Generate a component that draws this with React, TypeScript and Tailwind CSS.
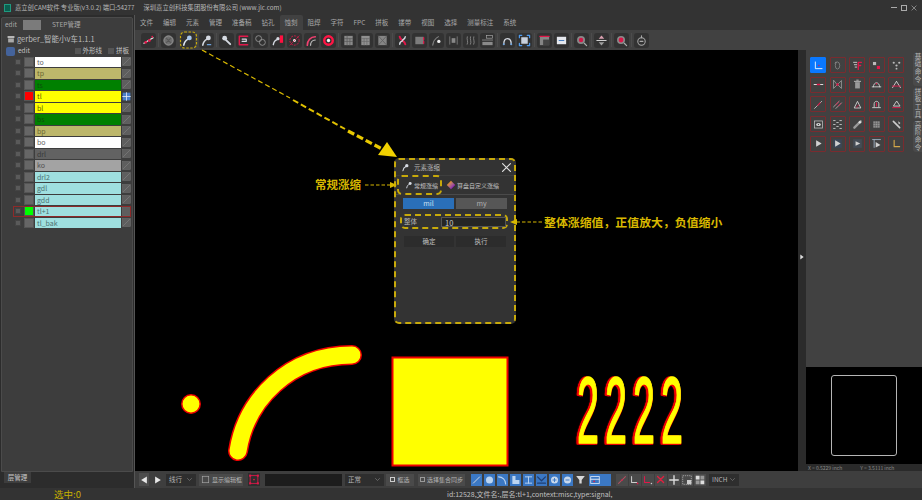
import type { ReactNode } from "react";

const W = "#d5dae2";
const R = "#e0184a";
const B = "#6fa3dc";
const G = "#8f8f8f";

function Ln({ d, c = W, w = 1.2 }: { d: string; c?: string; w?: number }) {
  return <path d={d} fill="none" stroke={c} strokeWidth={w} strokeLinecap="round" strokeLinejoin="round" />;
}

function Dot({ x, y, r = 1.5, c = R }: { x: number; y: number; r?: number; c?: string }) {
  return <circle cx={x} cy={y} r={r} fill={c} />;
}

function Ico({ children, className = "w-full h-full" }: { children: ReactNode; className?: string }) {
  return (
    <svg viewBox="0 0 14 14" className={className}>
      {children}
    </svg>
  );
}

const pin = (
  <>
    <Ln d="M3 12 C3.5 8.5 5.5 6.5 7.5 5.5" w={1.7} />
    <circle cx="9" cy="4.2" r="2.6" fill={W} />
  </>
);

const toolGroups: ReactNode[][] = [
  [
    <>
      <Ln d="M2 10 L12 4" c="#eee" />
      <Dot x={4} y={9} />
      <Dot x={8} y={7} />
      <Dot x={11} y={3} r={1} />
    </>,
  ],
  [
    <>
      <circle cx="7" cy="7" r="5" fill="#707070" stroke="#999" />
      <Ln d="M5 5 L9 9 M9 5 L5 9" c="#555" />
    </>,
    <>
      <Ln d="M3 12 C3.5 8.5 5.5 6.5 7.5 5.5" w={1.7} c="#dfe6f0" />
      <circle cx="9" cy="4.2" r="2.6" fill="#a8c8ee" />
    </>,
    <>
      {pin}
      <Ln d="M8 11.5 H11.5" c={B} w={1.4} />
    </>,
  ],
  [
    <>
      <circle cx="5" cy="4.5" r="2.6" fill={W} />
      <Ln d="M6 6 L11 11" w={2} />
    </>,
    <>
      <Ln d="M2.5 2.5 H11.5 M2.5 11.5 H11.5 M2.5 2.5 V11.5" c={R} w={1.6} />
      <Ln d="M5.5 5.5 H10 V8 H5.5" w={1.2} />
    </>,
    <>
      <circle cx="5" cy="5" r="3.2" fill="none" stroke={G} />
      <circle cx="9" cy="9" r="3.2" fill="none" stroke={G} />
    </>,
    <>
      <Ln d="M2.5 11.5 C3 8 5 6.5 6.5 6" w={1.5} />
      <circle cx="7.5" cy="5" r="1.8" fill={W} />
      <rect x="9.5" y="1.5" width="3.5" height="8" fill="#ff1040" />
    </>,
    <>
      <circle cx="7" cy="7" r="5" fill="none" stroke={R} strokeDasharray="2 1.2" />
      <Dot x={7} y={7} r={1.6} c="#eee" />
      <Ln d="M2 12 L12 2" c={R} w={0.7} />
    </>,
    <>
      <Ln d="M2.5 12 C2.5 7 6 3 11 3" c="#f04070" w={1.8} />
      <Ln d="M6 12 C6 9 8 6.5 11 6.5" c="#ccc" w={1.2} />
    </>,
    <>
      <circle cx="7" cy="7" r="4.6" fill="none" stroke="#ff1545" strokeWidth="2.6" />
      <Dot x={7} y={7} r={1.8} c="#f5f5f5" />
    </>,
  ],
  [
    <>
      <rect x="2.5" y="2" width="9" height="10" fill="#8a8a8a" />
      <Ln d="M5.5 2 V12 M8.5 5 V12 M2.5 5 H11.5 M2.5 8 H11.5" c="#555" w={0.7} />
    </>,
    <>
      <rect x="2.5" y="2" width="9" height="10" fill="#909090" />
      <Ln d="M5.5 5 V12 M8.5 5 V12 M2.5 5 H11.5 M2.5 8 H11.5" c="#666" w={0.7} />
    </>,
    <>
      <rect x="2.5" y="2" width="9" height="10" fill="#858585" />
      <Ln d="M2.5 2 L7 7 L11.5 2 M2.5 12 L7 7 L11.5 12" c="#5a5a5a" w={0.8} />
    </>,
  ],
  [
    <>
      <Ln d="M4 3 C4 6 10 8 10 11" c={R} w={2.2} />
      <Ln d="M10 3 C10 5 8 6 7 6.5 M4 11 C4 9 5.5 8 7 7.5" w={1.5} />
    </>,
    <>
      <rect x="2.5" y="3" width="9" height="8" fill="#7c7c7c" />
      <Ln d="M11.5 4 V6 M11.5 8 V10" c={R} w={1.4} />
    </>,
    <>
      <Ln d="M3 12 C3.5 8 5 5 9 3" c="#aaa" w={0.9} />
      <Dot x={9.5} y={8} r={1.8} c="#eee" />
    </>,
    <>
      <rect x="5" y="4.5" width="4" height="5" fill="#888" />
      <Ln d="M3 3 V11 M11 3 V11" c="#888" w={0.8} />
    </>,
    <Ln d="M3.5 3 C2.5 6 5 8 3.5 11 M7 3 C6 6 8.5 8 7 11 M10.5 3 C9.5 6 12 8 10.5 11" c="#999" w={0.8} />,
    <>
      <rect x="6" y="1.5" width="6.5" height="3" fill="none" stroke="#aaa" strokeWidth="0.7" />
      <Ln d="M1.5 6.5 H12.5" c="#aaa" w={0.7} />
      <rect x="1.5" y="8.5" width="11" height="3.5" fill="#8a8a8a" />
    </>,
  ],
  [
    <>
      <Ln d="M3 11 C3 3 11 3 11 11" w={1.4} />
      <Dot x={3} y={11} r={1.1} c={B} />
      <Dot x={11} y={11} r={1.1} c={B} />
    </>,
    <>
      <rect x="3.5" y="3.5" width="7" height="7" fill="#c8d0dc" />
      <Ln d="M1.5 4 V1.5 H4 M10 1.5 H12.5 V4 M1.5 10 V12.5 H4 M10 12.5 H12.5 V10" c="#4d9bf0" w={1.3} />
    </>,
  ],
  [
    <>
      <rect x="2" y="3" width="10" height="9" fill="#858585" />
      <rect x="5.5" y="6" width="6.5" height="6" fill="#444" />
      <Ln d="M2 2.5 H12" c={R} w={1.4} />
    </>,
    <>
      <rect x="2" y="3" width="10" height="8" fill="#e5e8ee" />
      <Ln d="M4.5 7 H9.5" c="#4a7fc0" w={1.2} />
    </>,
  ],
  [
    <>
      <circle cx="6.5" cy="6.5" r="4.3" fill="#888" />
      <circle cx="6.5" cy="6.5" r="2.4" fill="#d01848" />
      <Ln d="M10 10 L12.5 12.5" c="#aaa" w={1.3} />
    </>,
  ],
  [
    <>
      <Ln d="M2 7 H12" c="#ddd" w={1} />
      <path d="M7 1.5 L10 5 H4 Z" fill="#d9a0b0" />
      <path d="M7 12.5 L10 9 H4 Z" fill="#a0a0a0" />
    </>,
  ],
  [
    <>
      <circle cx="6.5" cy="6.5" r="4.3" fill="#8a8a8a" />
      <circle cx="6.5" cy="6.5" r="2.6" fill="#d81848" />
      <Ln d="M10 10 L12.5 12.5" c="#aaa" w={1.3} />
    </>,
  ],
  [
    <>
      <circle cx="7" cy="8" r="4" fill="none" stroke="#aaa" strokeWidth="1.1" />
      <Ln d="M5.5 8 H8.5 M7 2 V4" c="#aaa" />
    </>,
  ],
];

const sideIcons: ReactNode[] = [
  <>
    <Ln d="M3 2.5 V11 H11.5" c="#fff" w={1.1} />
    <Dot x={7.5} y={7} r={1} />
  </>,
  <>
    <ellipse cx="7" cy="7" rx="2.8" ry="4.5" fill="none" stroke="#888" />
    <Ln d="M5 2.5 L4 4" c="#888" />
  </>,
  <>
    <Ln d="M2 3 H6 M3 6 H6 M4 9 H6" c="#ccc" />
    <Ln d="M8 12 V3 H12 M8 7 H11" c={R} w={1.7} />
  </>,
  <>
    <rect x="2.5" y="2.5" width="4" height="4" fill="#bbb" />
    <rect x="7.5" y="7.5" width="4" height="4" fill={R} />
  </>,
  <>
    <circle cx="3.5" cy="3.5" r="1.4" fill="#bbb" />
    <circle cx="10.5" cy="3.5" r="1.4" fill="#bbb" />
    <circle cx="7" cy="7" r="1.4" fill="#bbb" />
    <circle cx="7" cy="11" r="1.2" fill="#bbb" />
  </>,
  <>
    <Ln d="M1.5 7 H5.5 M8.5 7 H12.5" c="#ddd" w={1.4} />
    <Ln d="M5.5 7 H8.5" c={R} w={1.6} />
  </>,
  <>
    <Ln d="M2 2 V12 L7 7 L12 12 V2 L7 7 Z" c="#aaa" w={0.9} />
    <Dot x={7} y={7} />
  </>,
  <>
    <rect x="4" y="4" width="6" height="8" fill="#999" />
    <Ln d="M3 3 H11 M6 1.5 H8" c="#bbb" />
  </>,
  <>
    <Ln d="M3 10 C3 3 11 3 11 10" c="#ccc" />
    <Ln d="M1.5 10 H12.5" c="#ccc" />
    <Dot x={7} y={6} r={1} />
  </>,
  <>
    <Ln d="M7 3 L2 11 M7 3 L12 11" c="#ccc" />
    <Ln d="M2 9 H12" c={R} />
  </>,
  <>
    <Ln d="M2 12 L11 3" c="#bbb" />
    <Ln d="M6 8 L9 5" c={R} w={1.4} />
  </>,
  <>
    <Ln d="M2 10 L9 3 M5 12 L12 5" c="#aaa" />
    <Ln d="M5 7 L8 4 M8 9 L11 6" c={R} />
  </>,
  <>
    <Ln d="M3 11 L7 3 L11 11 Z" c="#ccc" />
    <Ln d="M6 11 C6 9 7 8 8.5 8" c={R} w={0.8} />
  </>,
  <>
    <Ln d="M4 10 V6 C4 2 10 2 10 6 V10" c="#ccc" />
    <Ln d="M2 11 H12" c="#ccc" />
    <Ln d="M7 5 V9" c={R} />
  </>,
  <>
    <Ln d="M7 3 L3 9 H11 Z" c="#ccc" />
    <Ln d="M2 11 H12" c={R} />
  </>,
  <>
    <rect x="2" y="2.5" width="10" height="9" fill="none" stroke="#bbb" />
    <ellipse cx="7" cy="7" rx="3" ry="2" fill="#ddd" />
    <Dot x={7} y={7} r={0.9} c="#444" />
  </>,
  <Ln d="M2 2 H4 M10 2 H12 M2 12 H4 M10 12 H12 M2 7 H4 M10 7 H12 M6 4.5 H8 M6 9.5 H8" c="#ccc" w={1.1} />,
  <>
    <Ln d="M3 11 L11 3" c="#999" w={3} />
    <Dot x={10} y={4} r={1.6} c="#ddd" />
  </>,
  <>
    <rect x="3" y="3" width="8" height="8" fill="#999" />
    <Ln d="M5.5 3 V11 M8.5 3 V11 M3 5.5 H11 M3 8.5 H11" c="#555" w={0.7} />
  </>,
  <>
    <Ln d="M3 3 L11 11" c="#ccc" w={2} />
    <path d="M9 3 L12 5 L10 7 Z" fill="#ccc" />
  </>,
  <path d="M4 3 L11 7 L4 11 Z" fill="#d0d0d0" />,
  <>
    <rect x="1.5" y="1.5" width="11" height="11" fill="#3b4656" />
    <path d="M4 3 L11 7 L4 11 Z" fill="#d0d0d0" />
  </>,
  <>
    <rect x="1.5" y="1.5" width="11" height="11" fill="#444c55" />
    <path d="M4.5 4 L10.5 7 L4.5 10 Z" fill="#d0d0d0" />
  </>,
  <>
    <Ln d="M2 2 H12 M4 2 V12" c="#9ab" />
    <path d="M6 5 L12 9 L6 12 Z" fill="#d0d0d0" />
  </>,
  <Ln d="M4 3 V11 H11" c="#d4a84a" w={1.4} />,
];

const layers = [
  { name: "to", bg: "bg-white", text: "text-[#666]" },
  { name: "tp", bg: "bg-[#bdb76b]", text: "text-[#6b6630]" },
  { name: "ts", bg: "bg-[#008000]", text: "text-[#0c4f0c]" },
  { name: "tl", bg: "bg-[#ffff00]", text: "text-[#5c5c00]", swatch: "bg-[#ff0000]", grid: true },
  { name: "bl", bg: "bg-[#ffff00]", text: "text-[#5c5c00]" },
  { name: "bs", bg: "bg-[#008000]", text: "text-[#0c4f0c]" },
  { name: "bp", bg: "bg-[#bdb76b]", text: "text-[#6b6630]" },
  { name: "bo", bg: "bg-white", text: "text-[#666]" },
  { name: "drl", bg: "bg-[#626262]", text: "text-[#383838]" },
  { name: "ko", bg: "bg-[#a3a3a3]", text: "text-[#505050]" },
  { name: "drl2", bg: "bg-[#9fe0e0]", text: "text-[#4c7070]" },
  { name: "gdl", bg: "bg-[#9fe0e0]", text: "text-[#4c7070]" },
  { name: "gdd", bg: "bg-[#9fe0e0]", text: "text-[#4c7070]" },
  { name: "tl+1", bg: "bg-[#9fe0e0]", text: "text-[#4c7070]", swatch: "bg-[#00ff00]", active: true },
  { name: "tl_bak", bg: "bg-[#9fe0e0]", text: "text-[#4c7070]" },
];

const menus = ["文件", "编辑", "元素", "管理", "准备稿", "钻孔", "蚀刻", "阻焊", "字符", "FPC", "拼板", "镂带", "视图", "选择", "测量标注", "系统"];

function LayerRow({ layer }: { layer: (typeof layers)[number] }) {
  return (
    <div className={`relative flex items-center h-[11.5px] ${layer.active ? "outline outline-1 -outline-offset-1 outline-[#8e2a2a] ml-[11px] pl-[2px] mr-[1px]" : "pl-[13px]"}`}>
      <div className="w-[6px] h-[6px] bg-[#5a5a5a] border border-[#444]" />
      <div className={`ml-[3px] w-[10px] h-[10px] border border-[#555] ${layer.swatch ?? "bg-[#666]"}`} />
      <div className={`ml-[1px] w-[86px] h-[10.5px] leading-[10px] pl-[2px] text-[7px] ${layer.bg} ${layer.text}`}>{layer.name}</div>
      <div className="ml-[1px] w-[9px] h-[9px]">
        {layer.grid ? (
          <Ico>
            <rect x="1" y="1" width="12" height="12" fill="#4a7fc8" />
            <Ln d="M7 1 V13 M1 7 H13" c="#e8eef8" />
          </Ico>
        ) : (
          <Ico>
            <rect x="0.5" y="0.5" width="13" height="13" fill="#5e5e5e" stroke="#777" strokeWidth="0.6" />
            {!layer.active && <Ln d="M2 12 L12 2" c="#8a8a8a" w={0.8} />}
          </Ico>
        )}
      </div>
    </div>
  );
}

function LeftPanel() {
  return (
    <div className="w-[135px] shrink-0 flex flex-col bg-[#2c2c2c] border-r border-[#555]">
      <div className="flex-1 mx-[1px] mt-[2px] bg-[#3d3d3d] border border-[#4b4b4b] rounded-t-[2px] flex flex-col">
        <div className="flex items-center h-[13px] pl-[3px] text-[6.5px] text-[#a8a8a8]">
          <span>edit</span>
          <div className="ml-[6px] w-[18px] h-[10px] bg-[#7b7b7b]" />
          <span className="ml-[11px]">STEP管理</span>
        </div>
        <div className="flex items-center h-[12px] mt-[2px] pl-[5px] text-[7.5px] text-[#bdbdbd]">
          <svg viewBox="0 0 14 14" className="w-[8px] h-[8px] mr-[2px]">
            <rect x="1" y="2" width="12" height="3" fill="#ccc" />
            <rect x="2" y="6" width="10" height="7" fill="#aaa" />
          </svg>
          gerber_智能小v车1.1.1
        </div>
        <div className="flex items-center h-[12px] pl-[4px] text-[6.5px] text-[#c4c4c4]">
          <div className="w-[9px] h-[9px] rounded-[2px] bg-[#44639b] mr-[3px]" />
          <span>edit</span>
          <div className="ml-auto w-[6px] h-[6px] bg-[#555]" />
          <span className="ml-[2px]">外形线</span>
          <div className="ml-[6px] w-[6px] h-[6px] bg-[#555]" />
          <span className="ml-[2px] mr-[3px]">拼板</span>
        </div>
        <div className="mt-[-1px] flex flex-col">
          {layers.map((l) => (
            <LayerRow key={l.name} layer={l} />
          ))}
        </div>
      </div>
      <div className="h-[16px] shrink-0 pl-[4px]">
        <div className="w-[27px] h-[11px] leading-[11px] text-center bg-[#3d3d3d] text-[6.5px] text-[#c8c8c8]">层管理</div>
      </div>
    </div>
  );
}

function Toolbar() {
  return (
    <div className="h-[20px] shrink-0 flex items-center pl-[6px] bg-[#414141]">
      {toolGroups.map((group, i) => (
        <div key={i} className="flex items-center">
          {i > 0 && <div className="w-px h-[14px] mx-[2px] bg-[#4c4c4c]" />}
          <div className={`flex ${i === 1 ? "gap-[4px]" : "gap-[2px]"}`}>
            {group.map((icon, j) => (
              <div key={j} className="w-[15px] h-[15px] p-[1px] rounded-[3px] bg-[#323232]">
                <Ico>{icon}</Ico>
              </div>
            ))}
          </div>
        </div>
      ))}
    </div>
  );
}

function Dialog() {
  return (
    <div className="absolute left-[259px] top-[108px] w-[122px] h-[166px] bg-[#333] border-2 border-dashed border-[#c7a90a] rounded-[5px] flex flex-col">
      <div className="h-[16px] shrink-0 flex items-center pl-[5px] pr-[2px] border-b border-[#3e3e3e] text-[6.5px] text-[#b5b5b5]">
        <svg viewBox="0 0 14 14" className="w-[9px] h-[9px] mr-[4px]">{pin}</svg>
        元素涨缩
        <svg viewBox="0 0 14 14" className="ml-auto w-[11px] h-[11px]">
          <Ln d="M2 2 L12 12 M12 2 L2 12" c="#e2e2e2" w={1.5} />
        </svg>
      </div>
      <div className="h-[19px] shrink-0 flex items-center border-b border-[#4a4a4a] text-[6px] text-[#c0c0c0]">
        <div className="ml-[1px] w-[45px] h-[20px] flex items-center pl-[6px] border-2 border-dashed border-[#c7a90a] rounded-[5px] bg-[#333]">
          <svg viewBox="0 0 14 14" className="w-[8px] h-[8px] mr-[1px]">{pin}</svg>
          常规涨缩
        </div>
        <div className="ml-[6px] w-[6px] h-[6px] rotate-45 bg-gradient-to-r from-[#e09010] to-[#8a20b0] mr-[3px]" />
        <span>算盘自定义涨缩</span>
      </div>
      <div className="flex gap-[2px] mt-[3px] px-[7px] text-[7px]">
        <div className="flex-1 h-[10.5px] leading-[10px] text-center bg-[#2a6fb8] text-[#cfe0f2]">mil</div>
        <div className="flex-1 h-[10.5px] leading-[10px] text-center bg-[#565656] text-[#b0b0b0]">my</div>
      </div>
      <div className="mt-[5.5px] ml-[4px] mr-[6px] h-[15px] flex items-center pl-[2px] border-2 border-dashed border-[#c7a90a] rounded-[5px] text-[6.5px] text-[#b5b5b5]">
        <span>整体</span>
        <div className="ml-auto w-[65px] h-[10px] leading-[9px] pl-[3px] bg-[#252525] border border-[#555] text-[7.5px] text-[#c8c8c8]">10</div>
      </div>
      <div className="flex gap-[2px] mt-[7px] px-[8px] text-[6.5px] text-[#c0c0c0]">
        <div className="flex-1 h-[11px] leading-[11px] text-center bg-[#2c2c2c]">确定</div>
        <div className="flex-1 h-[11px] leading-[11px] text-center bg-[#2c2c2c]">执行</div>
      </div>
    </div>
  );
}

function CanvasArea() {
  return (
    <div className="relative flex-1 bg-black overflow-hidden">
      {/* board contents, coordinates are canvas pixels */}
      <svg className="absolute inset-0" width="662" height="421" viewBox="136 50 662 421">
        <circle cx="192" cy="404" r="9.2" fill="#ffff00" stroke="#f00000" strokeWidth="1.5" />
        <path d="M239 451 C247 400 290 355 353 355" fill="none" stroke="#f00000" strokeWidth="20" strokeLinecap="round" />
        <path d="M239 451 C247 400 290 355 353 355" fill="none" stroke="#ffff00" strokeWidth="17" strokeLinecap="round" />
        <rect x="393.5" y="357.5" width="115" height="108" fill="#ffff00" stroke="#f00000" strokeWidth="2" />
        {[578, 606, 634, 662].map((x) => (
          <text
            key={x}
            transform={`translate(${x} 443) scale(0.42 1)`}
            fontFamily="'Liberation Sans', sans-serif"
            fontSize="94"
            fill="#ffff00"
            stroke="#ffff00"
            strokeWidth="1.5"
            strokeLinejoin="round"
            className="[filter:drop-shadow(-5px_0_0_#f00000)_drop-shadow(0_1.5px_0_#f00000)]"
          >
            2
          </text>
        ))}
      </svg>
      <Dialog />
      <span className="absolute left-[180px] top-[126px] text-[11.5px] font-bold leading-[16px] text-[#d8b800]">常规涨缩</span>
      <span className="absolute left-[409px] top-[164px] text-[11.9px] font-bold leading-[16px] whitespace-nowrap text-[#d8b800]">整体涨缩值，正值放大，负值缩小</span>
    </div>
  );
}

function RightPanel() {
  return (
    <div className="w-[116px] shrink-0 flex flex-col">
      <div className="h-[317px] bg-[#414141] flex">
        <div className="grid grid-cols-5 gap-x-[3.6px] gap-y-[3.7px] pl-[4px] pt-[7px] h-fit">
          {sideIcons.map((icon, i) => (
            <div key={i} className={`w-[16px] h-[16px] p-[1.5px] rounded-[1px] border ${i === 0 ? "bg-[#0a78ff] border-[#0a78ff]" : "border-[#7a2b2f]"}`}>
              <Ico>{icon}</Ico>
            </div>
          ))}
        </div>
        <div className="ml-auto w-[9px] pt-[3px] flex flex-col gap-[2px] text-[6.5px] leading-[9px] tracking-[1.2px] text-[#b8b8b8] whitespace-nowrap">
          <div className="[writing-mode:vertical-rl] h-[33px] bg-[#4a4a4a] rounded-l-[3px]">基础命令</div>
          <div className="[writing-mode:vertical-rl] h-[31px] bg-[#4a4a4a] rounded-l-[3px]">拼板工具</div>
          <div className="[writing-mode:vertical-rl] h-[31px] bg-[#4a4a4a] rounded-l-[3px]">高阶命令</div>
        </div>
      </div>
      <div className="flex-1 bg-black flex items-center justify-center">
        <div className="w-[66px] h-[81px] rounded-[3px] border border-[#b5b5b5]" />
      </div>
      <div className="h-[7px] shrink-0 flex items-center gap-[18px] pl-[2px] bg-[#2a2a2a] text-[5px] text-[#8a8a8a]">
        <span>X = 0.5229 inch</span>
        <span>Y = 3.5111 inch</span>
      </div>
    </div>
  );
}

function Combo({ text, className }: { text: string; className: string }) {
  return (
    <div className={`h-[12px] flex items-center justify-between px-[3px] bg-[#2e2e2e] text-[6.5px] text-[#b5b5b5] ${className}`}>
      {text}
      <svg viewBox="0 0 14 14" className="w-[7px] h-[7px]">
        <Ln d="M3 5 L7 9 L11 5" c="#888" />
      </svg>
    </div>
  );
}

const blueIcons: ReactNode[] = [
  <Ln d="M3 11 L11 3" />,
  <circle cx="7" cy="7" r="4.5" fill="#bcd4f0" />,
  <Ln d="M2 3 C7 3 11 7 11 12" w={1.4} c="#bcd4f0" />,
  <path d="M3 2 H7 V7 H12 V12 H3 Z" fill="#bcd4f0" />,
  <Ln d="M3 3 H11 M3 11 H11 M7 3 V11" c="#bcd4f0" />,
  <Ln d="M2 3 L7 8 L12 3 M2 11 H12" c="#1f3f73" w={1.6} />,
  <>
    <circle cx="7" cy="7" r="4.5" fill="#c8d8ec" />
    <Ln d="M5 7 H9 M7 5 V9" c="#3a78c4" />
  </>,
  <>
    <circle cx="7" cy="7" r="4.5" fill="#c8d8ec" />
    <Ln d="M5 7 H9" c="#3a78c4" />
  </>,
];

const grayIcons: ReactNode[] = [
  <>
    <Ln d="M3 11 L11 3" c="#b05060" />
    <Dot x={7} y={7} r={1} />
  </>,
  <>
    <Ln d="M3 3 V10 H9" c="#ccc" />
    <Dot x={10} y={11} r={1} />
  </>,
  <>
    <Ln d="M3 3 V10 H9" c={R} />
    <Dot x={11} y={11} r={0.9} c="#ccc" />
  </>,
  <Ln d="M3 3 L10 10 M10 3 L3 10" c="#e02040" w={1.6} />,
  <Ln d="M7 2 V12 M2 7 H12" c="#ddd" w={1.6} />,
  <>
    <rect x="2" y="2" width="10" height="10" fill="none" stroke="#aaa" strokeDasharray="1.5 1" />
    <rect x="7" y="7" width="5" height="5" fill="#ccc" />
  </>,
  <>
    <rect x="2" y="2" width="4.5" height="4.5" fill="#ddd" />
    <rect x="7.5" y="7.5" width="4.5" height="4.5" fill="#ddd" />
    <rect x="7.5" y="2" width="4.5" height="4.5" fill="#999" />
    <rect x="2" y="7.5" width="4.5" height="4.5" fill="#999" />
  </>,
];

function BottomBar() {
  return (
    <div className="h-[17px] shrink-0 flex items-center pl-[4px] bg-[#3e3e3e] text-[6px] text-[#b5b5b5] whitespace-nowrap">
      <div className="w-[10px] h-[13px] flex items-center justify-center bg-[#4d4d4d]">
        <svg viewBox="0 0 14 14" className="w-[10px] h-[10px]">
          <path d="M11 2 L3 7 L11 12 Z" fill="#e8e8e8" />
        </svg>
      </div>
      <div className="ml-[4px] w-[10px] h-[13px] flex items-center justify-center">
        <svg viewBox="0 0 14 14" className="w-[10px] h-[10px]">
          <path d="M3 2 L11 7 L3 12 Z" fill="#e8e8e8" />
        </svg>
      </div>
      <Combo text="线行" className="ml-[3px] w-[30px]" />
      <div className="ml-[3px] w-[44px] h-[12px] flex items-center gap-[2px] pl-[2px] bg-[#4a4a4a]">
        <svg viewBox="0 0 14 14" className="w-[9px] h-[9px] shrink-0">
          <rect x="2" y="2" width="10" height="10" fill="none" stroke="#aaa" />
        </svg>
        显示编辑框
      </div>
      <div className="ml-[5px] w-[12px] h-[13px] bg-[#2e2e2e]">
        <Ico>
          <rect x="2.5" y="2.5" width="9" height="9" fill="none" stroke={R} />
          <Dot x={7} y={7} r={1} />
          <rect x="1.3" y="1.3" width="2.4" height="2.4" fill={R} />
          <rect x="10.3" y="1.3" width="2.4" height="2.4" fill={R} />
          <rect x="1.3" y="10.3" width="2.4" height="2.4" fill={R} />
          <rect x="10.3" y="10.3" width="2.4" height="2.4" fill={R} />
        </Ico>
      </div>
      <div className="ml-[5px] w-[77px] h-[12px] bg-[#1d1d1d]" />
      <Combo text="正常" className="ml-[3px] w-[39px]" />
      <div className="ml-[2px] w-[28px] h-[12px] flex items-center justify-center gap-[2px] bg-[#4a4a4a]">
        <div className="w-[5px] h-[5px] border border-[#ccc]" />
        框选
      </div>
      <div className="ml-[4px] w-[47px] h-[12px] flex items-center gap-[2px] pl-[2px] bg-[#4a4a4a]">
        <div className="w-[5px] h-[5px] shrink-0 border border-[#999]" />
        选择集合同步
      </div>
      <div className="ml-[6px] flex gap-[2px]">
        {blueIcons.map((icon, i) => (
          <div key={i} className="w-[11px] h-[12px] bg-[#3b78c4]">
            <Ico>{icon}</Ico>
          </div>
        ))}
      </div>
      <svg viewBox="0 0 14 14" className="ml-[2px] w-[11px] h-[11px]">
        <path d="M1.5 2.5 H12.5 L8.5 7.5 V12 H5.5 V7.5 Z" fill="#d8d8d8" />
      </svg>
      <div className="ml-[3px] w-[22px] h-[12px] flex items-center bg-[#3b78c4]">
        <svg viewBox="0 0 14 14" className="w-[12px] h-[12px]">
          <rect x="2" y="3" width="10" height="8" fill="none" stroke="#d8e4f4" />
          <Ln d="M2 6 H12" c="#d8e4f4" />
          <Dot x={6} y={8.5} r={1} />
        </svg>
      </div>
      <div className="ml-[5px] flex gap-[1px]">
        {grayIcons.map((icon, i) => (
          <div key={i} className="w-[12px] h-[12px] bg-[#4a4a4a]">
            <Ico>{icon}</Ico>
          </div>
        ))}
      </div>
      <div className="ml-[3px]">
        <Combo text="INCH" className="w-[30px]" />
      </div>
    </div>
  );
}

export default function App() {
  return (
    <div className="relative w-[922px] h-[500px] overflow-hidden flex flex-col bg-[#333] font-['Noto_Sans_CJK_SC','Noto_Sans',sans-serif]">
      {/* title bar */}
      <div className="h-[15px] shrink-0 flex items-center pl-[4px] pr-[5px] text-[6.3px] text-[#b8b8b8] whitespace-pre">
        <div className="w-[7px] h-[8px] mr-[4px] bg-[#0a5f4f] border border-[#1f9a80]" />
        <span>嘉立创CAM软件 专业版(v3.0.2) 端口:54277</span>
        <span className="ml-[9px]">深圳嘉立创科技集团股份有限公司 (www.jlc.com)</span>
        <div className="ml-auto flex items-center gap-[4px]">
          <div className="w-[6px] h-px bg-[#aaa]" />
          <div className="w-[6px] h-[6px] border border-[#aaa]" />
          <svg viewBox="0 0 14 14" className="w-[6px] h-[6px]">
            <Ln d="M2 2 L12 12 M12 2 L2 12" c="#aaa" w={1.6} />
          </svg>
        </div>
      </div>

      <div className="flex-1 flex min-h-0">
        <LeftPanel />
        <div className="flex-1 flex flex-col min-w-0">
          <div className="h-[15px] shrink-0 flex items-stretch text-[6.5px] text-[#a8a8a8]">
            {menus.map((m) => (
              <div key={m} className={`px-[5px] leading-[15px] rounded-t-[2px] ${m === "蚀刻" ? "bg-[#414141]" : ""}`}>
                {m}
              </div>
            ))}
          </div>
          <Toolbar />
          <div className="flex-1 flex min-h-0">
            <CanvasArea />
            <div className="w-[8px] shrink-0 bg-[#2b2b2b] flex items-center justify-center">
              <svg viewBox="0 0 14 14" className="w-[6px] h-[6px] mt-[-8px]">
                <path d="M3 1 L11 7 L3 13 Z" fill="#ddd" />
              </svg>
            </div>
            <RightPanel />
          </div>
          <BottomBar />
        </div>
      </div>

      {/* status bar */}
      <div className="h-[12px] shrink-0 flex items-center text-[7px] text-[#c0c0c0]">
        <div className="w-[135px] text-center text-[9.5px] text-[#c8b000]">选中:0</div>
        <span className="ml-[312px]">id:12528,文件名:,层名:tl+1,context:misc,type:signal,</span>
      </div>

      {/* annotation arrows drawn over the app */}
      <svg className="absolute inset-0 pointer-events-none" width="922" height="500" viewBox="0 0 922 500">
        <rect x="180.5" y="32" width="16" height="16" rx="4" fill="none" stroke="#c7a90a" strokeWidth="1.2" strokeDasharray="2.5 1.5" />
        <path d="M202 50 L290 98" stroke="#d8b800" strokeWidth="1.2" strokeDasharray="5 3" />
        <path d="M293 100 L345 129" stroke="#e0c000" strokeWidth="2" strokeDasharray="6 3" />
        <path d="M348 131 L384 150" stroke="#e8c800" strokeWidth="3.2" strokeDasharray="7 3" />
        <polygon points="397,157 378,155 387,142" fill="#f0d000" />
        <path d="M365 185 H391" stroke="#d8b800" strokeWidth="1" strokeDasharray="3.5 2" />
        <polygon points="397,185 390,182 390,188" fill="#d8b800" />
        <path d="M542 222 H516" stroke="#d8b800" strokeWidth="1" strokeDasharray="3.5 2" />
        <polygon points="510,222 517,219 517,225" fill="#d8b800" />
      </svg>
    </div>
  );
}
